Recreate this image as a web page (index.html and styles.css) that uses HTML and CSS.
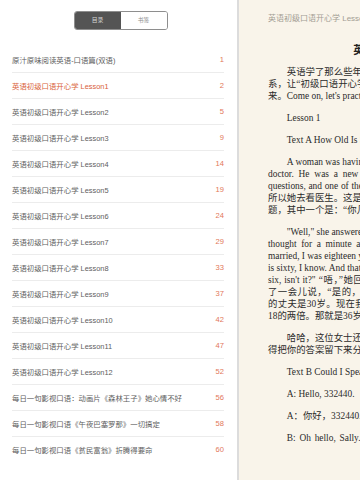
FILE: index.html
```html
<!DOCTYPE html>
<html lang="zh-CN">
<head>
  <meta charset="UTF-8">
  <meta name="viewport" content="width=device-width, initial-scale=1.0">
  <title>英语初级口语开心学</title>
  <link rel="stylesheet" href="styles.css">
</head>
<body>
  <div class="screen">
    <!-- Panneau du sommaire -->
    <aside class="toc">
      <div class="tabs">
        <div class="tabs-box">
          <span class="tab active">目录</span>
          <span class="tab">书签</span>
        </div>
      </div>
      <ul class="chapters">
        <li><span class="name">原汁原味阅读英语-口语篇(双语)</span><span class="page">1</span></li>
        <li class="current"><span class="name">英语初级口语开心学 Lesson1</span><span class="page">2</span></li>
        <li><span class="name">英语初级口语开心学 Lesson2</span><span class="page">5</span></li>
        <li><span class="name">英语初级口语开心学 Lesson3</span><span class="page">9</span></li>
        <li><span class="name">英语初级口语开心学 Lesson4</span><span class="page">14</span></li>
        <li><span class="name">英语初级口语开心学 Lesson5</span><span class="page">19</span></li>
        <li><span class="name">英语初级口语开心学 Lesson6</span><span class="page">24</span></li>
        <li><span class="name">英语初级口语开心学 Lesson7</span><span class="page">29</span></li>
        <li><span class="name">英语初级口语开心学 Lesson8</span><span class="page">33</span></li>
        <li><span class="name">英语初级口语开心学 Lesson9</span><span class="page">37</span></li>
        <li><span class="name">英语初级口语开心学 Lesson10</span><span class="page">42</span></li>
        <li><span class="name">英语初级口语开心学 Lesson11</span><span class="page">47</span></li>
        <li><span class="name">英语初级口语开心学 Lesson12</span><span class="page">52</span></li>
        <li><span class="name">每日一句影视口语：动画片《森林王子》她心情不好</span><span class="page">56</span></li>
        <li><span class="name">每日一句影视口语《午夜巴塞罗那》一切搞定</span><span class="page">58</span></li>
        <li><span class="name">每日一句影视口语《贫民富翁》折腾得要命</span><span class="page">60</span></li>
      </ul>
    </aside>

    <!-- Page du livre -->
    <main class="reader">
      <div class="reader-inner">
        <div class="running-head">英语初级口语开心学 Lesson1</div>
        <h1 class="chapter-title">英语初级口语开心学 Lesson1</h1>
        <div class="text">
          <p>
            <span class="ln first">英语学了那么些年，是不是还是张不开嘴、开不了口呢？别着急，没关</span>
            <span class="ln">系，让“初级口语开心学”带你从零开始，轻松开口说英语，自信地大声说出</span>
            <span class="ln end">来。Come on, let's practice!</span>
          </p>
          <p><span class="ln first end">Lesson 1</span></p>
          <p><span class="ln first end">Text A How Old Is She?</span></p>
          <p>
            <span class="ln first">A woman was having some trouble with her heart, so she decided to go and see a</span>
            <span class="ln">doctor. He was a new doctor and did not know her, so he asked her some</span>
            <span class="ln">questions, and one of them was, “How old are you?” 一位女士心脏有些问题，</span>
            <span class="ln">所以她去看医生。这是一位新来的医生，他并不认识她，所以就问了她一些问</span>
            <span class="ln end">题，其中一个是：“你几岁了？”</span>
          </p>
          <p>
            <span class="ln first">"Well," she answered, "I can't remember exactly, but I'll try to think about it." She</span>
            <span class="ln">thought for a minute and then said, "Yes, I remember now, Doctor! When I</span>
            <span class="ln">married, I was eighteen years old, and my husband was thirty years old. Now my husband</span>
            <span class="ln">is sixty, I know. And that's twice thirty, isn't it? So I'm twice eighteen. That's thirty-</span>
            <span class="ln">six, isn't it?" “唔，”她回答，“我记不太清楚了，但我会试着想一想。”她想</span>
            <span class="ln">了一会儿说，“是的，我现在想起来了，医生！我结婚的时候是18岁，我</span>
            <span class="ln">的丈夫是30岁。现在我的丈夫60岁了，我知道。这是30的两倍。所以我是</span>
            <span class="ln end">18的两倍。那就是36岁，对吧？”</span>
          </p>
          <p>
            <span class="ln first">哈哈，这位女士还真是会算账呢！你觉得她说得对不对呢？读完故事，记</span>
            <span class="ln end">得把你的答案留下来分享给大家哦！</span>
          </p>
          <p><span class="ln first end">Text B Could I Speak to Sally?</span></p>
          <p><span class="ln first end">A: Hello, 332440.</span></p>
          <p><span class="ln first end">A：你好，332440.</span></p>
          <p><span class="ln first">B: Oh hello, Sally. This is Mary. Could I speak to your mother, please? I</span></p>
        </div>
      </div>
    </main>
  </div>
</body>
</html>
```

FILE: styles.css
```css
body {
  margin: 0;
  width: 360px;
  height: 480px;
  overflow: hidden;
  font-family: "Liberation Sans", "Noto Sans CJK SC", sans-serif;
  background-color: #f9f4ea;
}

.screen {
  display: flex;
  height: 480px;
}

/* Sommaire */
.toc {
  width: 237px;
  flex-shrink: 0;
  background-color: #fff;
  border-right: 2px solid #dcdcdc;
}

.tabs {
  display: flex;
  justify-content: center;
  padding: 11px 0 0 4px;
}

.tabs-box {
  display: flex;
  border: 1px solid #8e8e8e;
  border-radius: 3px;
  overflow: hidden;
}

.tab {
  width: 46px;
  height: 17px;
  line-height: 17px;
  text-align: center;
  font-size: 5.8px;
  color: #8a8a8a;
  background-color: #fff;
}

.tab.active {
  background-color: #545454;
  color: #d8d8d8;
}

.chapters {
  list-style: none;
  margin: 17px 13px 0 12px;
  padding: 0;
}

.chapters li {
  display: flex;
  justify-content: space-between;
  align-items: center;
  height: 25px;
  border-bottom: 1px solid #ececec;
  font-size: 7.4px;
  color: #5e5e5e;
}

.chapters li:last-child {
  border-bottom: none;
}

.chapters .page {
  font-size: 7.6px;
  color: #e2775a;
}

.chapters li.current .name {
  color: #d9623a;
}

/* Page de lecture */
.reader {
  flex: 1;
  min-width: 0;
  overflow: hidden;
  background-color: #f9f4ea;
}

.reader-inner {
  width: 310px;
  padding: 13px 0 0 29px;
}

.running-head {
  font-size: 8px;
  line-height: 12px;
  color: #a39d94;
  white-space: nowrap;
}

.chapter-title {
  margin: 18px 0 9px;
  font-family: "Liberation Serif", "Noto Sans CJK SC", serif;
  font-size: 11px;
  line-height: 14px;
  font-weight: bold;
  text-align: center;
  color: #222;
  white-space: nowrap;
}

.text p {
  margin: 0 0 10px;
  font-family: "Liberation Serif", "Noto Sans CJK SC", serif;
  font-size: 9.4px;
  line-height: 12px;
  color: #2b2b2b;
}

.ln {
  display: block;
  white-space: nowrap;
  text-align: justify;
  text-align-last: justify;
}

.ln.first {
  text-indent: 2em;
}

.ln.end {
  text-align-last: left;
}
```
